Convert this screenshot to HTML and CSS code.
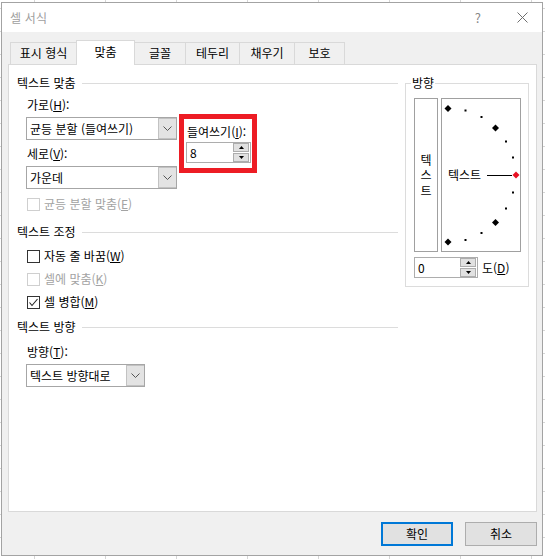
FILE: index.html
```html
<!DOCTYPE html>
<html lang="ko">
<head>
<meta charset="utf-8">
<title>셀 서식</title>
<link rel="stylesheet" href="styles.css">
</head>
<body>
<div class="window">
  <div class="titlebar">
    <span class="title">셀 서식</span>
    <span class="help">?</span>
    <svg class="close" width="11" height="11" viewBox="0 0 11 11"><path d="M0.5 0.5 L10.5 10.5 M10.5 0.5 L0.5 10.5" stroke="#6e6e6e" stroke-width="1" fill="none"/></svg>
  </div>
  <div class="dlg-body">
    <div class="tabs">
      <div class="tab t1">표시 형식</div>
      <div class="tab t2 active">맞춤</div>
      <div class="tab t3">글꼴</div>
      <div class="tab t4">테두리</div>
      <div class="tab t5">채우기</div>
      <div class="tab t6">보호</div>
    </div>
    <div class="panel">
      <div class="left">
        <div class="section-head">텍스트 맞춤</div>
        <div class="sub">
          <div class="align-row">
            <div class="align-fields">
              <div class="label">가로(<u>H</u>):</div>
              <div class="combo combo-wide">
                <span class="combo-text">균등 분할 (들여쓰기)</span>
                <span class="drop"><svg width="9" height="5" viewBox="0 0 9 5"><polyline points="0.5,0.5 4.5,4.5 8.5,0.5" fill="none" stroke="#555" stroke-width="1"/></svg></span>
              </div>
              <div class="label label-gap">세로(<u>V</u>):</div>
              <div class="combo combo-wide">
                <span class="combo-text">가운데</span>
                <span class="drop"><svg width="9" height="5" viewBox="0 0 9 5"><polyline points="0.5,0.5 4.5,4.5 8.5,0.5" fill="none" stroke="#555" stroke-width="1"/></svg></span>
              </div>
            </div>
            <div class="indent-box">
              <div class="label">들여쓰기(<u>I</u>):</div>
              <div class="spin spin-indent">
                <span class="spin-val">8</span>
                <span class="spin-btns">
                  <span class="sbtn"><svg width="5" height="3" viewBox="0 0 5 3"><polygon points="2.5,0 5,3 0,3" fill="#000"/></svg></span>
                  <span class="sbtn"><svg width="5" height="3" viewBox="0 0 5 3"><polygon points="0,0 5,0 2.5,3" fill="#000"/></svg></span>
                </span>
              </div>
            </div>
          </div>
          <div class="check disabled row-e"><span class="box"></span><span>균등 분할 맞춤(<u>E</u>)</span></div>
        </div>

        <div class="section-head head-2">텍스트 조정</div>
        <div class="sub">
          <div class="check row-w"><span class="box"></span><span>자동 줄 바꿈(<u>W</u>)</span></div>
          <div class="check disabled row-k"><span class="box"></span><span>셀에 맞춤(<u>K</u>)</span></div>
          <div class="check row-m"><span class="box"><svg width="11" height="11" viewBox="0 0 11 11"><polyline points="1.5,5.5 4,8.5 9.5,2" fill="none" stroke="#222" stroke-width="1.1"/></svg></span><span>셀 병합(<u>M</u>)</span></div>
        </div>

        <div class="section-head head-3">텍스트 방향</div>
        <div class="sub">
          <div class="label label-dir">방향(<u>T</u>):</div>
          <div class="combo combo-dir">
            <span class="combo-text">텍스트 방향대로</span>
            <span class="drop"><svg width="9" height="5" viewBox="0 0 9 5"><polyline points="0.5,0.5 4.5,4.5 8.5,0.5" fill="none" stroke="#555" stroke-width="1"/></svg></span>
          </div>
        </div>
      </div>

      <div class="right">
        <div class="group">
          <div class="group-title">방향</div>
          <div class="orient-row">
            <div class="vtext"><span>텍</span><span>스</span><span>트</span></div>
            <div class="dial">
              <svg class="dial-svg" width="78" height="152" viewBox="0 0 78 152">
                <g fill="#000">
                  <polygon points="6,6 9.5,9.5 6,13 2.5,9.5"/>
                  <rect x="22.5" y="10.5" width="2" height="2"/>
                  <rect x="38.5" y="17" width="2" height="2"/>
                  <polygon points="53.5,25.5 57,29 53.5,32.5 50,29"/>
                  <rect x="63" y="41.5" width="2" height="2"/>
                  <rect x="70" y="57.5" width="2" height="2"/>
                  <rect x="70" y="92.5" width="2" height="2"/>
                  <rect x="63" y="108.5" width="2" height="2"/>
                  <polygon points="53.5,120 57,123.5 53.5,127 50,123.5"/>
                  <rect x="38.5" y="133" width="2" height="2"/>
                  <rect x="22.5" y="140" width="2" height="2"/>
                  <polygon points="6,139.5 9.5,143 6,146.5 2.5,143"/>
                </g>
                <line x1="45" y1="76.5" x2="70" y2="76.5" stroke="#000" stroke-width="1"/>
                <polygon points="74,72.5 77.5,76 74,79.5 70.5,76" fill="#e81123"/>
              </svg>
              <span class="dial-text">텍스트</span>
            </div>
          </div>
          <div class="deg-row">
            <div class="spin spin-deg">
              <span class="spin-val">0</span>
              <span class="spin-btns">
                <span class="sbtn"><svg width="5" height="3" viewBox="0 0 5 3"><polygon points="2.5,0 5,3 0,3" fill="#000"/></svg></span>
                <span class="sbtn"><svg width="5" height="3" viewBox="0 0 5 3"><polygon points="0,0 5,0 2.5,3" fill="#000"/></svg></span>
              </span>
            </div>
            <span class="deg-label">도(<u>D</u>)</span>
          </div>
        </div>
      </div>
    </div>
    <div class="buttons">
      <div class="btn btn-default">확인</div>
      <div class="btn">취소</div>
    </div>
  </div>
</div>
</body>
</html>
```

FILE: styles.css
```css
* { box-sizing: border-box; }
html, body { margin: 0; padding: 0; }
body {
  width: 545px;
  height: 559px;
  overflow: hidden;
  font-family: "Noto Sans CJK KR", "Noto Sans", sans-serif;
  font-size: 12px;
  line-height: 16px;
  color: #000;
  background-color: #ffffff;
  background-image:
    repeating-linear-gradient(90deg, transparent 0 34px, #d6d6d6 34px 35px, transparent 35px 71px),
    repeating-linear-gradient(180deg, transparent 0 8px, #d6d6d6 8px 9px, transparent 9px 23px);
}
u { text-decoration: underline; text-underline-offset: 1px; }

.window {
  margin: 2px 0 0 1px;
  width: 542px;
  height: 554px;
  border: 1px solid #a3a3a3;
  background: #f0f0f0;
  display: flex;
  flex-direction: column;
}

.titlebar {
  height: 29px;
  flex: none;
  background: #fff;
  display: flex;
  align-items: center;
  padding: 0 14px 0 8px;
  color: #a0a0a0;
}
.title { flex: 1; letter-spacing: 0.2px; }
.help { color: #888; font-size: 13px; margin-right: 36px; }
.close { display: block; }

.dlg-body {
  flex: 1;
  padding: 8px 5px 0 6px;
}

.tabs {
  display: flex;
  align-items: flex-end;
  height: 24px;
  padding-left: 2px;
  position: relative;
  z-index: 1;
}
.tab {
  height: 22px;
  border: 1px solid #d9d9d9;
  border-bottom: none;
  margin-right: -1px;
  text-align: center;
  line-height: 20px;
  background: #f0f0f0;
}
.tab.active {
  height: 25px;
  margin-bottom: -1px;
  line-height: 22px;
  background: #fff;
  position: relative;
  z-index: 2;
}
.t1 { width: 67px; }
.t2 { width: 59px; }
.t3 { width: 52px; }
.t4 { width: 55px; }
.t5 { width: 56px; }
.t6 { width: 51px; }

.panel {
  height: 448px;
  background: #fff;
  border: 1px solid #d9d9d9;
  display: grid;
  grid-template-columns: 381px 124px;
  column-gap: 7px;
  align-items: start;
  padding-left: 8px;
}

.left { padding-top: 10px; }

.section-head {
  display: flex;
  align-items: center;
  height: 16px;
}
.section-head::after {
  content: "";
  flex: 1;
  height: 1px;
  background: #dcdcdc;
  margin-left: 6px;
}
.head-2 { margin-top: 12px; }
.head-3 { margin-top: 9px; }

.sub { padding-left: 9px; }

.label { height: 16px; padding-left: 1px; white-space: nowrap; }
.label-gap { margin-top: 6px; }
.label-dir { margin-top: 9px; }

.align-row { display: flex; margin-top: 6px; }
.align-fields { width: 151px; }

.combo {
  display: flex;
  height: 23px;
  margin-top: 4px;
  border: 1px solid #a6a6a6;
  background: #fff;
}
.combo-wide { width: 151px; }
.combo-dir { width: 119px; }
.combo-text {
  flex: 1;
  padding-left: 3px;
  line-height: 21px;
  white-space: nowrap;
  overflow: hidden;
}
.drop {
  width: 18px;
  background: #e3e3e3;
  border: 1px solid #c2c2c2;
  border-right: none;
  display: flex;
  align-items: center;
  justify-content: center;
}
.drop svg { display: block; }

.indent-box {
  width: 78px;
  height: 59px;
  margin: 17px 0 0 2px;
  border: 5px solid #ed1c24;
  background: #fff;
  padding: 5px 0 0 2px;
}
.indent-box .label { padding-left: 1px; }

.spin {
  display: flex;
  align-items: center;
  height: 21px;
  border: 1px solid #adadad;
  background: #fff;
  padding: 0 1px 0 3px;
}
.spin-indent { width: 65px; margin-top: 2px; }
.spin-deg { width: 64px; }
.spin-val { flex: 1; line-height: 19px; }
.spin-btns {
  display: flex;
  flex-direction: column;
  gap: 1px;
}
.sbtn {
  width: 16px;
  height: 9px;
  border: 1px solid #adadad;
  background: #e1e1e1;
  display: flex;
  align-items: center;
  justify-content: center;
}
.sbtn svg { display: block; }

.check {
  display: flex;
  align-items: center;
  gap: 4px;
  height: 16px;
  padding-left: 1px;
  white-space: nowrap;
}
.check .box {
  width: 13px;
  height: 13px;
  border: 1px solid #333;
  background: #fff;
  display: flex;
  align-items: center;
  justify-content: center;
}
.check .box svg { display: block; }
.check.disabled { color: #a3a3a3; }
.check.disabled .box { border-color: #cfcfcf; }
.row-e { margin-top: 7px; }
.row-w { margin-top: 8px; }
.row-k { margin-top: 7px; }
.row-m { margin-top: 7px; }

.right { padding-top: 18px; }
.group {
  height: 204px;
  border: 1px solid #dcdcdc;
}
.group-title {
  width: max-content;
  margin: -9px 0 0 5px;
  padding: 0 1px;
  background: #fff;
  height: 16px;
}
.orient-row {
  display: flex;
  gap: 3px;
  margin: 7px 0 0 8px;
}
.vtext {
  width: 24px;
  height: 154px;
  border: 1px solid #a0a0a0;
  display: flex;
  flex-direction: column;
  align-items: center;
  justify-content: center;
  line-height: 15.5px;
}
.dial {
  width: 80px;
  height: 154px;
  border: 1px solid #a0a0a0;
  position: relative;
}
.dial-svg { display: block; }
.dial-text {
  position: absolute;
  left: 6px;
  top: 68px;
  line-height: 16px;
}

.deg-row {
  display: flex;
  align-items: center;
  gap: 4px;
  margin: 5px 0 0 8px;
}

.buttons {
  display: flex;
  justify-content: flex-end;
  gap: 12px;
  margin-top: 10px;
}
.btn {
  width: 72px;
  height: 24px;
  border: 1px solid #adadad;
  background: #e1e1e1;
  text-align: center;
  line-height: 22px;
}
.btn-default {
  border: 2px solid #0078d7;
  line-height: 20px;
}
```
